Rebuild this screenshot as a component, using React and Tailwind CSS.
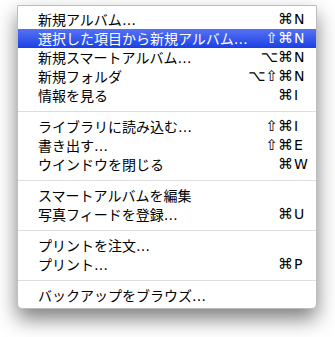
const sections = [
  [
    { label: '新規アルバム', dots: true, mods: '⌘', key: 'N' },
    { label: '選択した項目から新規アルバム', dots: true, mods: '⇧⌘', key: 'N', active: true },
    { label: '新規スマートアルバム', dots: true, mods: '⌥⌘', key: 'N' },
    { label: '新規フォルダ', mods: '⌥⇧⌘', key: 'N' },
    { label: '情報を見る', mods: '⌘', key: 'I' },
  ],
  [
    { label: 'ライブラリに読み込む', dots: true, mods: '⇧⌘', key: 'I' },
    { label: '書き出す', dots: true, mods: '⇧⌘', key: 'E' },
    { label: 'ウインドウを閉じる', mods: '⌘', key: 'W' },
  ],
  [
    { label: 'スマートアルバムを編集' },
    { label: '写真フィードを登録', dots: true, mods: '⌘', key: 'U' },
  ],
  [
    { label: 'プリントを注文', dots: true },
    { label: 'プリント', dots: true, mods: '⌘', key: 'P' },
  ],
  [{ label: 'バックアップをブラウズ', dots: true }],
];

const MenuItem = ({ item }) => (
  <div
    className={`flex items-center h-[19px] pl-[20px] pr-[10px] ${
      item.active ? 'bg-gradient-to-b from-[#5671f2] to-[#1b3ee6] text-white' : 'text-black'
    }`}
  >
    <span className="flex-1 text-[14px] leading-[19px] font-['Noto_Sans_CJK_JP',sans-serif] whitespace-nowrap">
      {item.label}
      {item.dots && <span className="font-['DejaVu_Sans',sans-serif]">…</span>}
    </span>
    {item.key && (
      <span className="flex items-center text-[15px] leading-[19px] font-['DejaVu_Sans',sans-serif]">
        <span className="text-right">{item.mods}</span>
        <span className="w-[13px] text-[14px] pl-[1px]">{item.key}</span>
      </span>
    )}
  </div>
);

export default function App() {
  return (
    <div className="w-[335px] h-[337px] bg-white pl-[17px] pt-[5px]">
      <div className="w-[300px] bg-white border border-[#bdbdbd] rounded-b-[5px] pt-[4px] pb-[3px] shadow-[0_10px_20px_rgba(0,0,0,0.5)]">
        {sections.map((items, i) => (
          <div key={i}>
            {i > 0 && (
              <div className="h-[12px] flex items-center">
                <div className="h-px w-full bg-[#dedede]" />
              </div>
            )}
            {items.map((item) => (
              <MenuItem key={item.label} item={item} />
            ))}
          </div>
        ))}
      </div>
    </div>
  );
}
